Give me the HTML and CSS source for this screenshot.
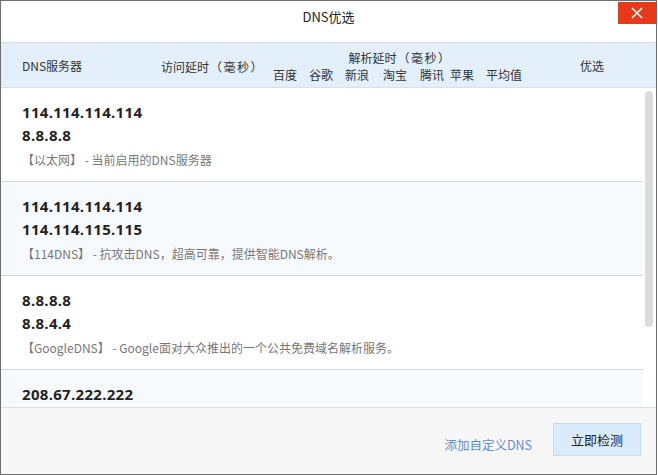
FILE: index.html
```html
<!DOCTYPE html>
<html lang="zh-CN">
<head>
  <meta charset="UTF-8" />
  <title>DNS优选</title>
  <link rel="stylesheet" href="styles.css">
</head>
<body>
  <div class="window">
    <div class="titlebar">
      <span class="title">DNS优选</span>
      <a class="close">
        <svg width="12" height="12" viewBox="0 0 12 12"><path d="M1 1L11 11M11 1L1 11" stroke="#fff" stroke-width="1.6" /></svg>
      </a>
    </div>
    <div class="thead">
      <div class="col-server">DNS服务器</div>
      <div class="col-visit">访问延时<span class="unit">（毫秒）</span></div>
      <div class="col-resolve">
        <div class="resolve-title">解析延时<span class="unit">（毫秒）</span></div>
        <div class="resolve-sites">
          <span>百度</span>
          <span>谷歌</span>
          <span>新浪</span>
          <span class="push2">淘宝</span>
          <span class="push1">腾讯</span>
          <span class="tight">苹果</span>
          <span>平均值</span>
        </div>
      </div>
      <div class="col-best">优选</div>
    </div>
    <div class="list-wrap">
      <div class="list">
        <div class="row">
          <div class="ip">114.114.114.114</div>
          <div class="ip">8.8.8.8</div>
          <div class="desc">【以太网】 - 当前启用的DNS服务器</div>
        </div>
        <div class="row alt">
          <div class="ip">114.114.114.114</div>
          <div class="ip">114.114.115.115</div>
          <div class="desc">【114DNS】 - 抗攻击DNS，超高可靠，提供智能DNS解析。</div>
        </div>
        <div class="row">
          <div class="ip">8.8.8.8</div>
          <div class="ip">8.8.4.4</div>
          <div class="desc">【GoogleDNS】 - Google面对大众推出的一个公共免费域名解析服务。</div>
        </div>
        <div class="row alt">
          <div class="ip">208.67.222.222</div>
        </div>
      </div>
      <div class="scrollbar"><div class="thumb"></div></div>
    </div>
    <div class="footer">
      <a class="add-link">添加自定义DNS</a>
      <button class="check-btn">立即检测</button>
    </div>
  </div>
</body>
</html>
```

FILE: styles.css
```css
body {
  margin: 0;
  padding: 0;
  background: #fff;
  font-family: "Noto Sans CJK SC", "Noto Sans", sans-serif;
  color: #333;
}
.window {
  width: 657px;
  height: 475px;
  box-sizing: border-box;
  border: 1px solid #6e6e6e;
  display: flex;
  flex-direction: column;
  overflow: hidden;
}
.titlebar {
  height: 41px;
  position: relative;
  text-align: center;
  background: #fff;
}
.title {
  display: block;
  font-size: 13px;
  line-height: 32px;
  color: #222;
}
.close {
  position: absolute;
  top: 1px;
  right: 0;
  width: 38px;
  height: 22px;
  background: #e8391a;
  display: flex;
  align-items: center;
  justify-content: center;
}
.thead {
  height: 44px;
  background: #e3f0fb;
  border-top: 1px solid #cddeec;
  border-bottom: 1px solid #d3e2ee;
  display: flex;
  align-items: center;
  font-size: 12px;
  color: #333;
}
.unit {
  letter-spacing: 1.5px;
  margin-left: 1px;
}
.col-server {
  width: 139px;
  padding-left: 21px;
  padding-top: 1px;
}
.col-visit {
  width: 112px;
  padding-top: 3px;
}
.col-resolve {
  width: 307px;
}
.resolve-title {
  text-align: center;
  width: 254px;
  line-height: 17px;
  padding-top: 2px;
}
.resolve-sites {
  display: flex;
  gap: 12px;
  line-height: 17px;
}
.resolve-sites .push2 {
  margin-left: 2px;
}
.resolve-sites .push1 {
  margin-left: 1px;
}
.resolve-sites .tight {
  margin-left: -6px;
}
.col-best {
  width: 40px;
  padding-top: 1px;
}
.list-wrap {
  height: 319px;
  display: flex;
  overflow: hidden;
}
.list {
  width: 642px;
}
.row {
  height: 94px;
  box-sizing: border-box;
  padding: 13px 0 0 21px;
  border-bottom: 1px solid #d6d6d6;
  background: #fff;
}
.row.alt {
  background: #f7fafd;
}
.ip {
  font-family: "Open Sans", "Noto Sans", sans-serif;
  font-weight: bold;
  font-size: 15px;
  letter-spacing: 0.3px;
  line-height: 23px;
  color: #222;
}
.desc {
  font-size: 12px;
  line-height: 25px;
  color: #777;
}
.scrollbar {
  width: 13px;
  padding: 3px 0 0 2px;
  box-sizing: border-box;
}
.thumb {
  width: 8px;
  height: 236px;
  border-radius: 4px;
  background: #dcdcdc;
}
.footer {
  flex: 1;
  background: #f7f7f7;
  border-top: 1px solid #dddddd;
  display: flex;
  align-items: center;
  justify-content: flex-end;
  padding-right: 15px;
  padding-bottom: 2px;
}
.add-link {
  font-size: 12.5px;
  color: #5e8fcf;
  margin-right: 21px;
  margin-top: 8px;
  cursor: pointer;
}
.check-btn {
  width: 88px;
  height: 33px;
  background: #daecfb;
  border: 1px solid #c3dcf0;
  font-family: "Noto Sans CJK SC", sans-serif;
  font-size: 13px;
  color: #222;
  cursor: pointer;
  margin-bottom: 2px;
}
```
